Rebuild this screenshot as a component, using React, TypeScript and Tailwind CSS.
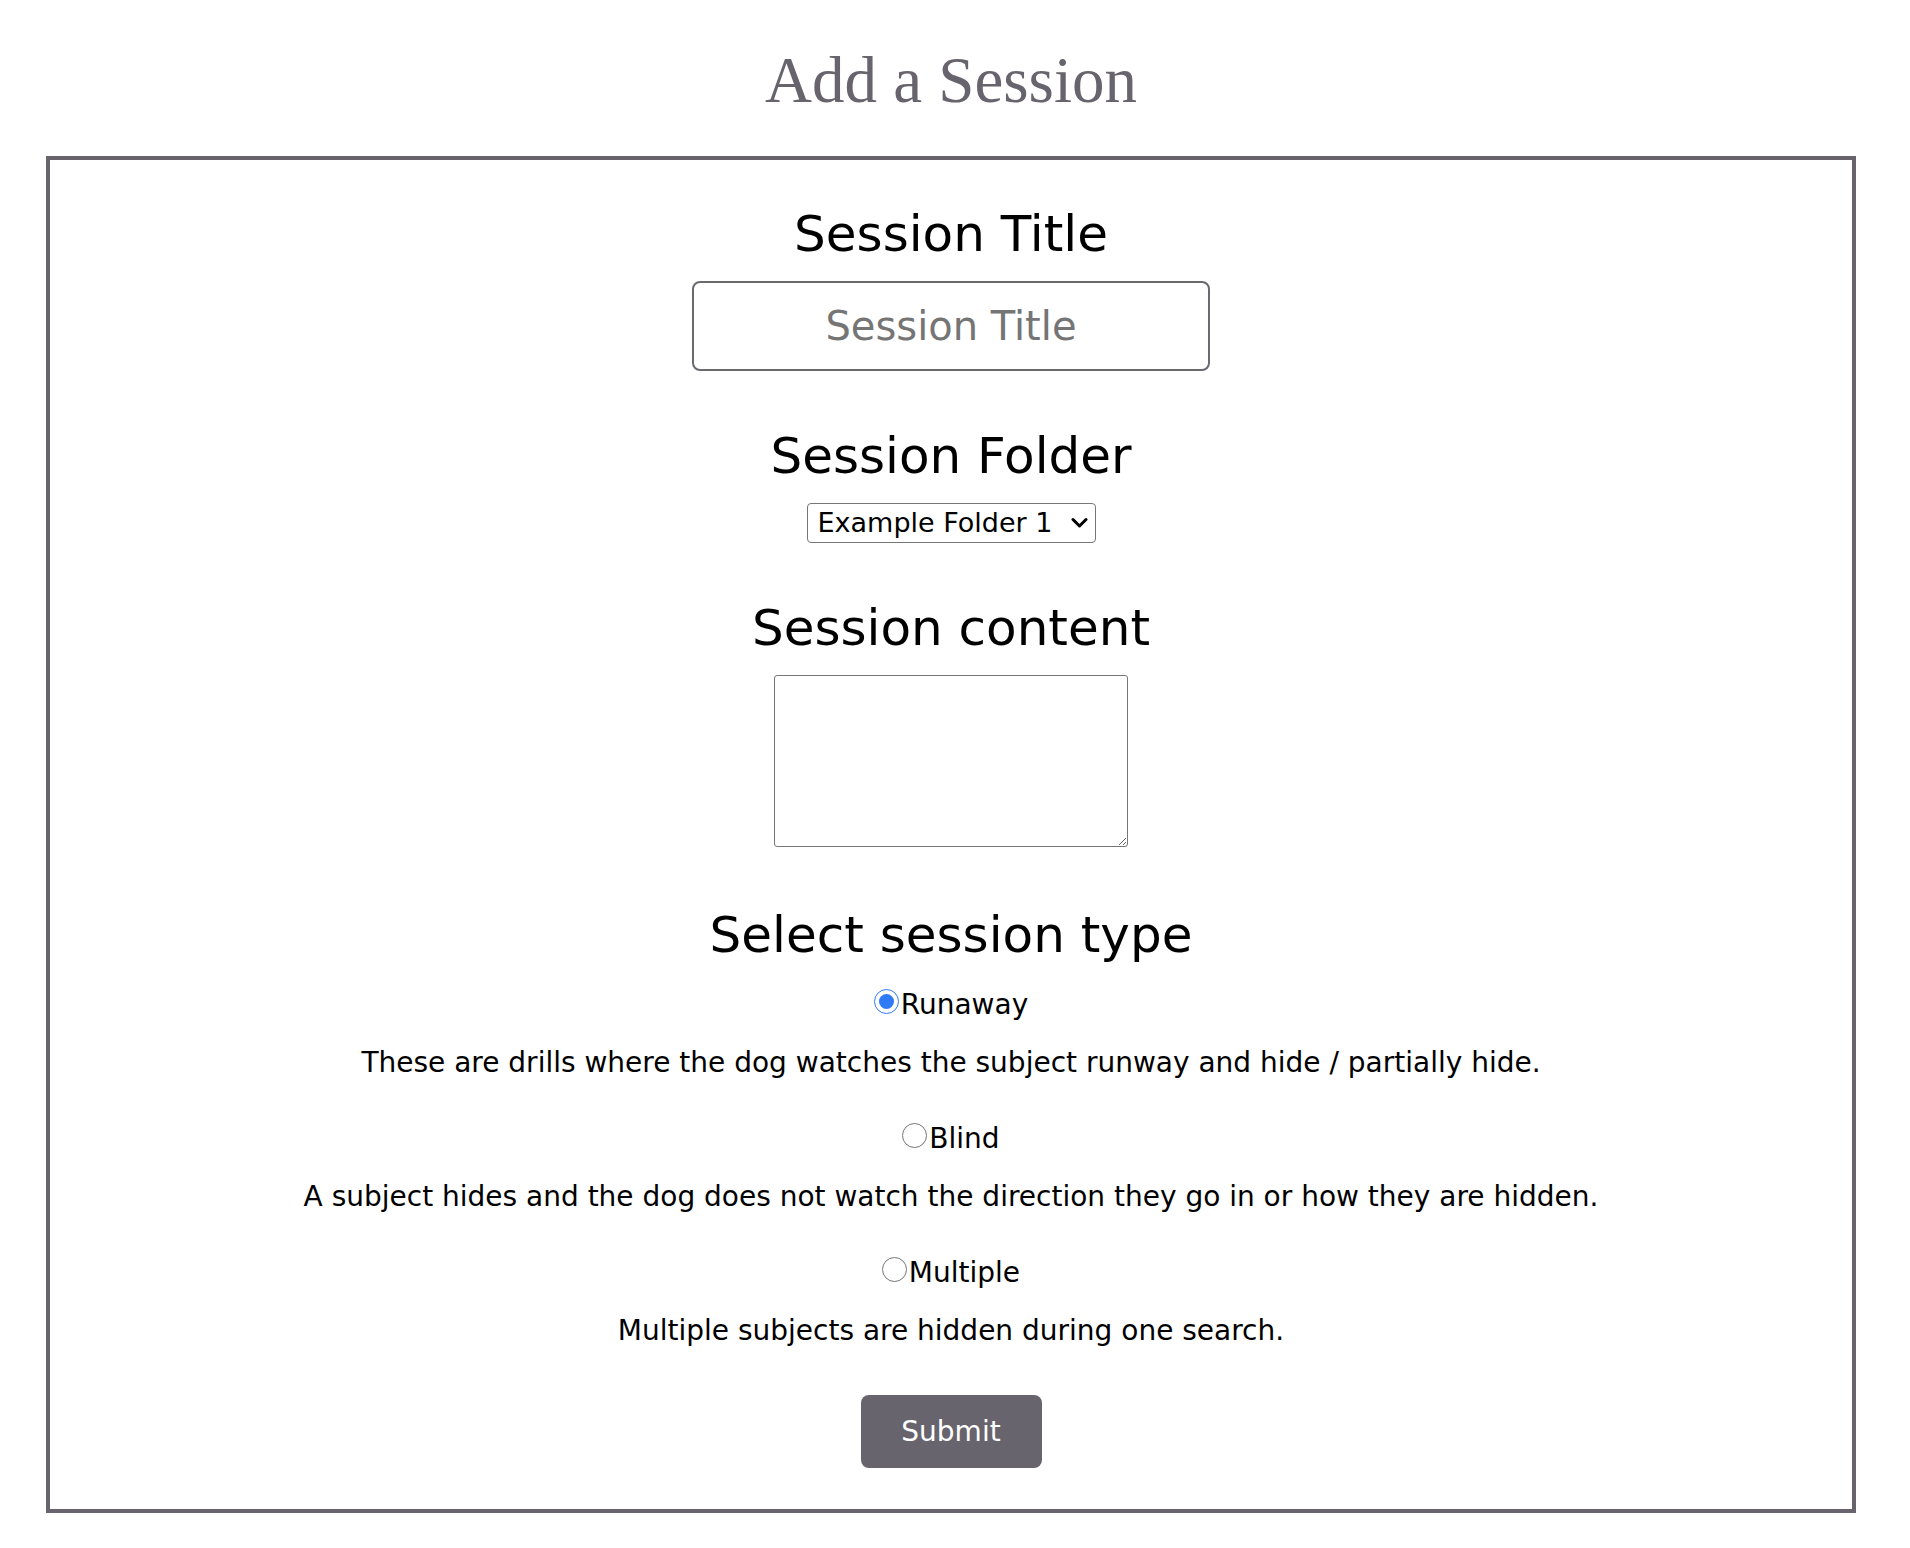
import { useState } from "react";

const sessionTypes = [
  {
    id: "runaway",
    label: "Runaway",
    description:
      "These are drills where the dog watches the subject runway and hide / partially hide.",
  },
  {
    id: "blind",
    label: "Blind",
    description:
      "A subject hides and the dog does not watch the direction they go in or how they are hidden.",
  },
  {
    id: "multiple",
    label: "Multiple",
    description: "Multiple subjects are hidden during one search.",
  },
];

function Heading({ children }: { children: React.ReactNode }) {
  return (
    <h2 className="text-[50px] leading-[60px] font-normal text-black">
      {children}
    </h2>
  );
}

export default function App() {
  const [type, setType] = useState("runaway");

  return (
    <div className="min-h-[1548px] bg-white font-['DejaVu_Sans',Verdana,sans-serif] text-black">
      <div className="ml-[46px] w-[1810px]">
        <h1 className="mt-[44px] text-center font-['Liberation_Serif',Georgia,serif] text-[65px] leading-[72px] text-[#68646e]">
          Add a Session
        </h1>

        <form
          onSubmit={(e) => e.preventDefault()}
          className="mt-[40px] flex flex-col items-center border-4 border-[#68646e] pt-[44px] pb-[41px]"
        >
          {/* Title */}
          <Heading>Session Title</Heading>
          <input
            type="text"
            placeholder="Session Title"
            className="mt-[17px] h-[90px] w-[518px] rounded-[8px] border-2 border-[#6c6870] text-center text-[40px] outline-none placeholder:text-[#757575]"
          />

          {/* Folder */}
          <div className="mt-[55px]">
            <Heading>Session Folder</Heading>
          </div>
          <div className="relative mt-[17px]">
            <select className="h-[40px] w-[289px] appearance-none rounded-[4px] border border-[#767676] bg-white pl-[10px] text-[27px] leading-[38px] outline-none">
              <option>Example Folder 1</option>
              <option>Example Folder 2</option>
            </select>
            <svg
              className="pointer-events-none absolute right-[8px] top-[14px]"
              width="17"
              height="12"
              viewBox="0 0 17 12"
            >
              <path
                d="M2 2.5 L8.5 9 L15 2.5"
                fill="none"
                stroke="#000"
                strokeWidth="3"
                strokeLinecap="round"
                strokeLinejoin="round"
              />
            </svg>
          </div>

          {/* Content */}
          <div className="mt-[55px]">
            <Heading>Session content</Heading>
          </div>
          <textarea className="mt-[17px] h-[172px] w-[354px] rounded-[3px] border border-[#767676] text-[24px] outline-none" />

          {/* Type */}
          <div className="mt-[58px]">
            <Heading>Select session type</Heading>
          </div>
          <div className="mt-[24px] flex flex-col items-center">
            {sessionTypes.map((t, i) => (
              <div
                key={t.id}
                className={i === 0 ? "flex flex-col items-center" : "mt-[44px] flex flex-col items-center"}
              >
                <label className="flex h-[32px] items-center text-[28px] leading-[32px]">
                  <input
                    type="radio"
                    name="sessionType"
                    checked={type === t.id}
                    onChange={() => setType(t.id)}
                    className="mb-[8px] mr-[2px] h-[25px] w-[25px] accent-[#2f7af5]"
                  />
                  {t.label}
                </label>
                <p className="mt-[26px] text-[28px] leading-[32px]">
                  {t.description}
                </p>
              </div>
            ))}
          </div>

          <button
            type="submit"
            className="mt-[48px] h-[73px] w-[181px] rounded-[8px] bg-[#68646e] text-[28px] text-white"
          >
            Submit
          </button>
        </form>
      </div>
    </div>
  );
}
